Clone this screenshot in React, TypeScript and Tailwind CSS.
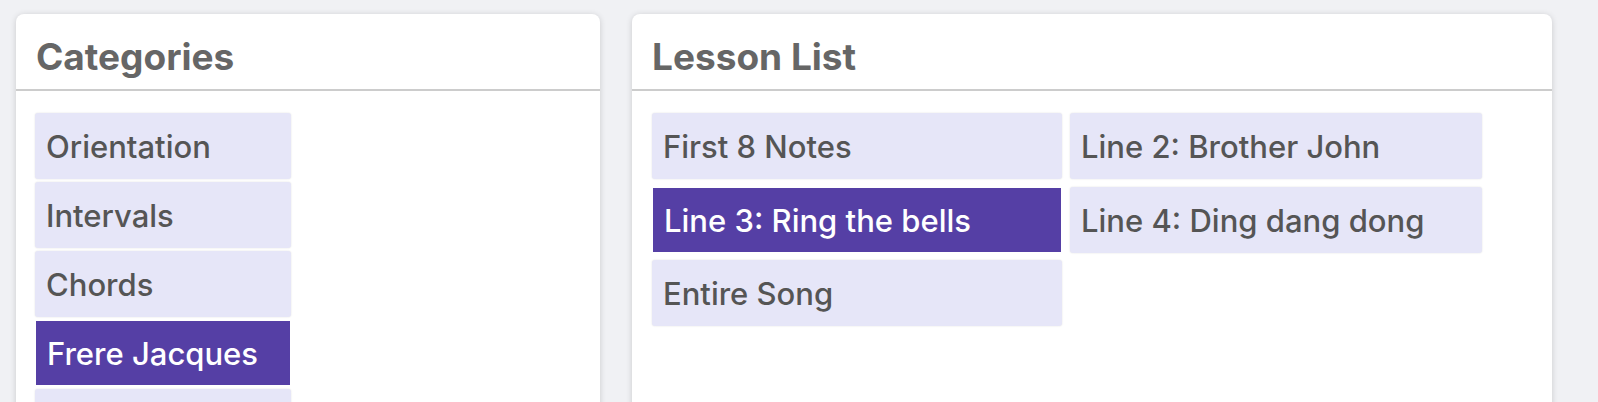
import React from "react";

const categories = [
  { label: "Orientation", selected: false },
  { label: "Intervals", selected: false },
  { label: "Chords", selected: false },
  { label: "Frere Jacques", selected: true },
  { label: "", selected: false },
];

const lessons = [
  { label: "First 8 Notes", selected: false },
  { label: "Line 2: Brother John", selected: false },
  { label: "Line 3: Ring the bells", selected: true },
  { label: "Line 4: Ding dang dong", selected: false },
  { label: "Entire Song", selected: false },
];

function Item({ label, selected, className }: { label: string; selected: boolean; className: string }) {
  return (
    <div
      className={
        selected
          ? `flex shrink-0 items-center h-[64px] px-[11px] bg-[#553fa5] text-white text-[31px] font-medium ${className}`
          : `flex shrink-0 items-center h-[66px] px-[11px] bg-[#e6e6f8] text-[#555555] text-[31px] font-medium rounded-[3px] shadow-[0_0_2px_rgba(0,0,0,0.12)] ${className}`
      }
    >
      {label && <span className="pt-[3px] whitespace-nowrap">{label}</span>}
    </div>
  );
}

export default function App() {
  return (
    <div
      className="h-[402px] w-[1598px] overflow-hidden bg-[#f0f1f4] flex items-start gap-[32px] pl-[16px] pt-[14px]"
      style={{ fontFamily: "Inter, 'Noto Sans', sans-serif" }}
    >
      <section className="w-[584px] h-[440px] bg-white rounded-[8px] shadow-[0_1px_6px_rgba(0,0,0,0.16)] flex flex-col overflow-hidden">
        <header className="shrink-0 h-[77px] flex items-end px-[20px] pb-[14px] border-b-2 border-[#cccccc]">
          <h2 className="text-[37px] font-bold text-[#666666] leading-none">Categories</h2>
        </header>
        <div className="flex flex-col gap-[3px] pl-[19px] pt-[22px]">
          {categories.map((c, i) => (
            <Item key={i} label={c.label} selected={c.selected} className={c.selected ? "w-[254px] mx-[1px] my-[1px]" : "w-[256px]"} />
          ))}
        </div>
      </section>
      <section className="w-[920px] h-[440px] bg-white rounded-[8px] shadow-[0_1px_6px_rgba(0,0,0,0.16)] flex flex-col overflow-hidden">
        <header className="shrink-0 h-[77px] flex items-end px-[20px] pb-[14px] border-b-2 border-[#cccccc]">
          <h2 className="text-[37px] font-bold text-[#666666] leading-none">Lesson List</h2>
        </header>
        <div className="grid grid-cols-[410px_412px] gap-x-[8px] gap-y-[7.5px] pl-[20px] pt-[22px]">
          {lessons.map((l) => (
            <Item key={l.label} label={l.label} selected={l.selected} className={l.selected ? "m-[1px]" : ""} />
          ))}
        </div>
      </section>
    </div>
  );
}
